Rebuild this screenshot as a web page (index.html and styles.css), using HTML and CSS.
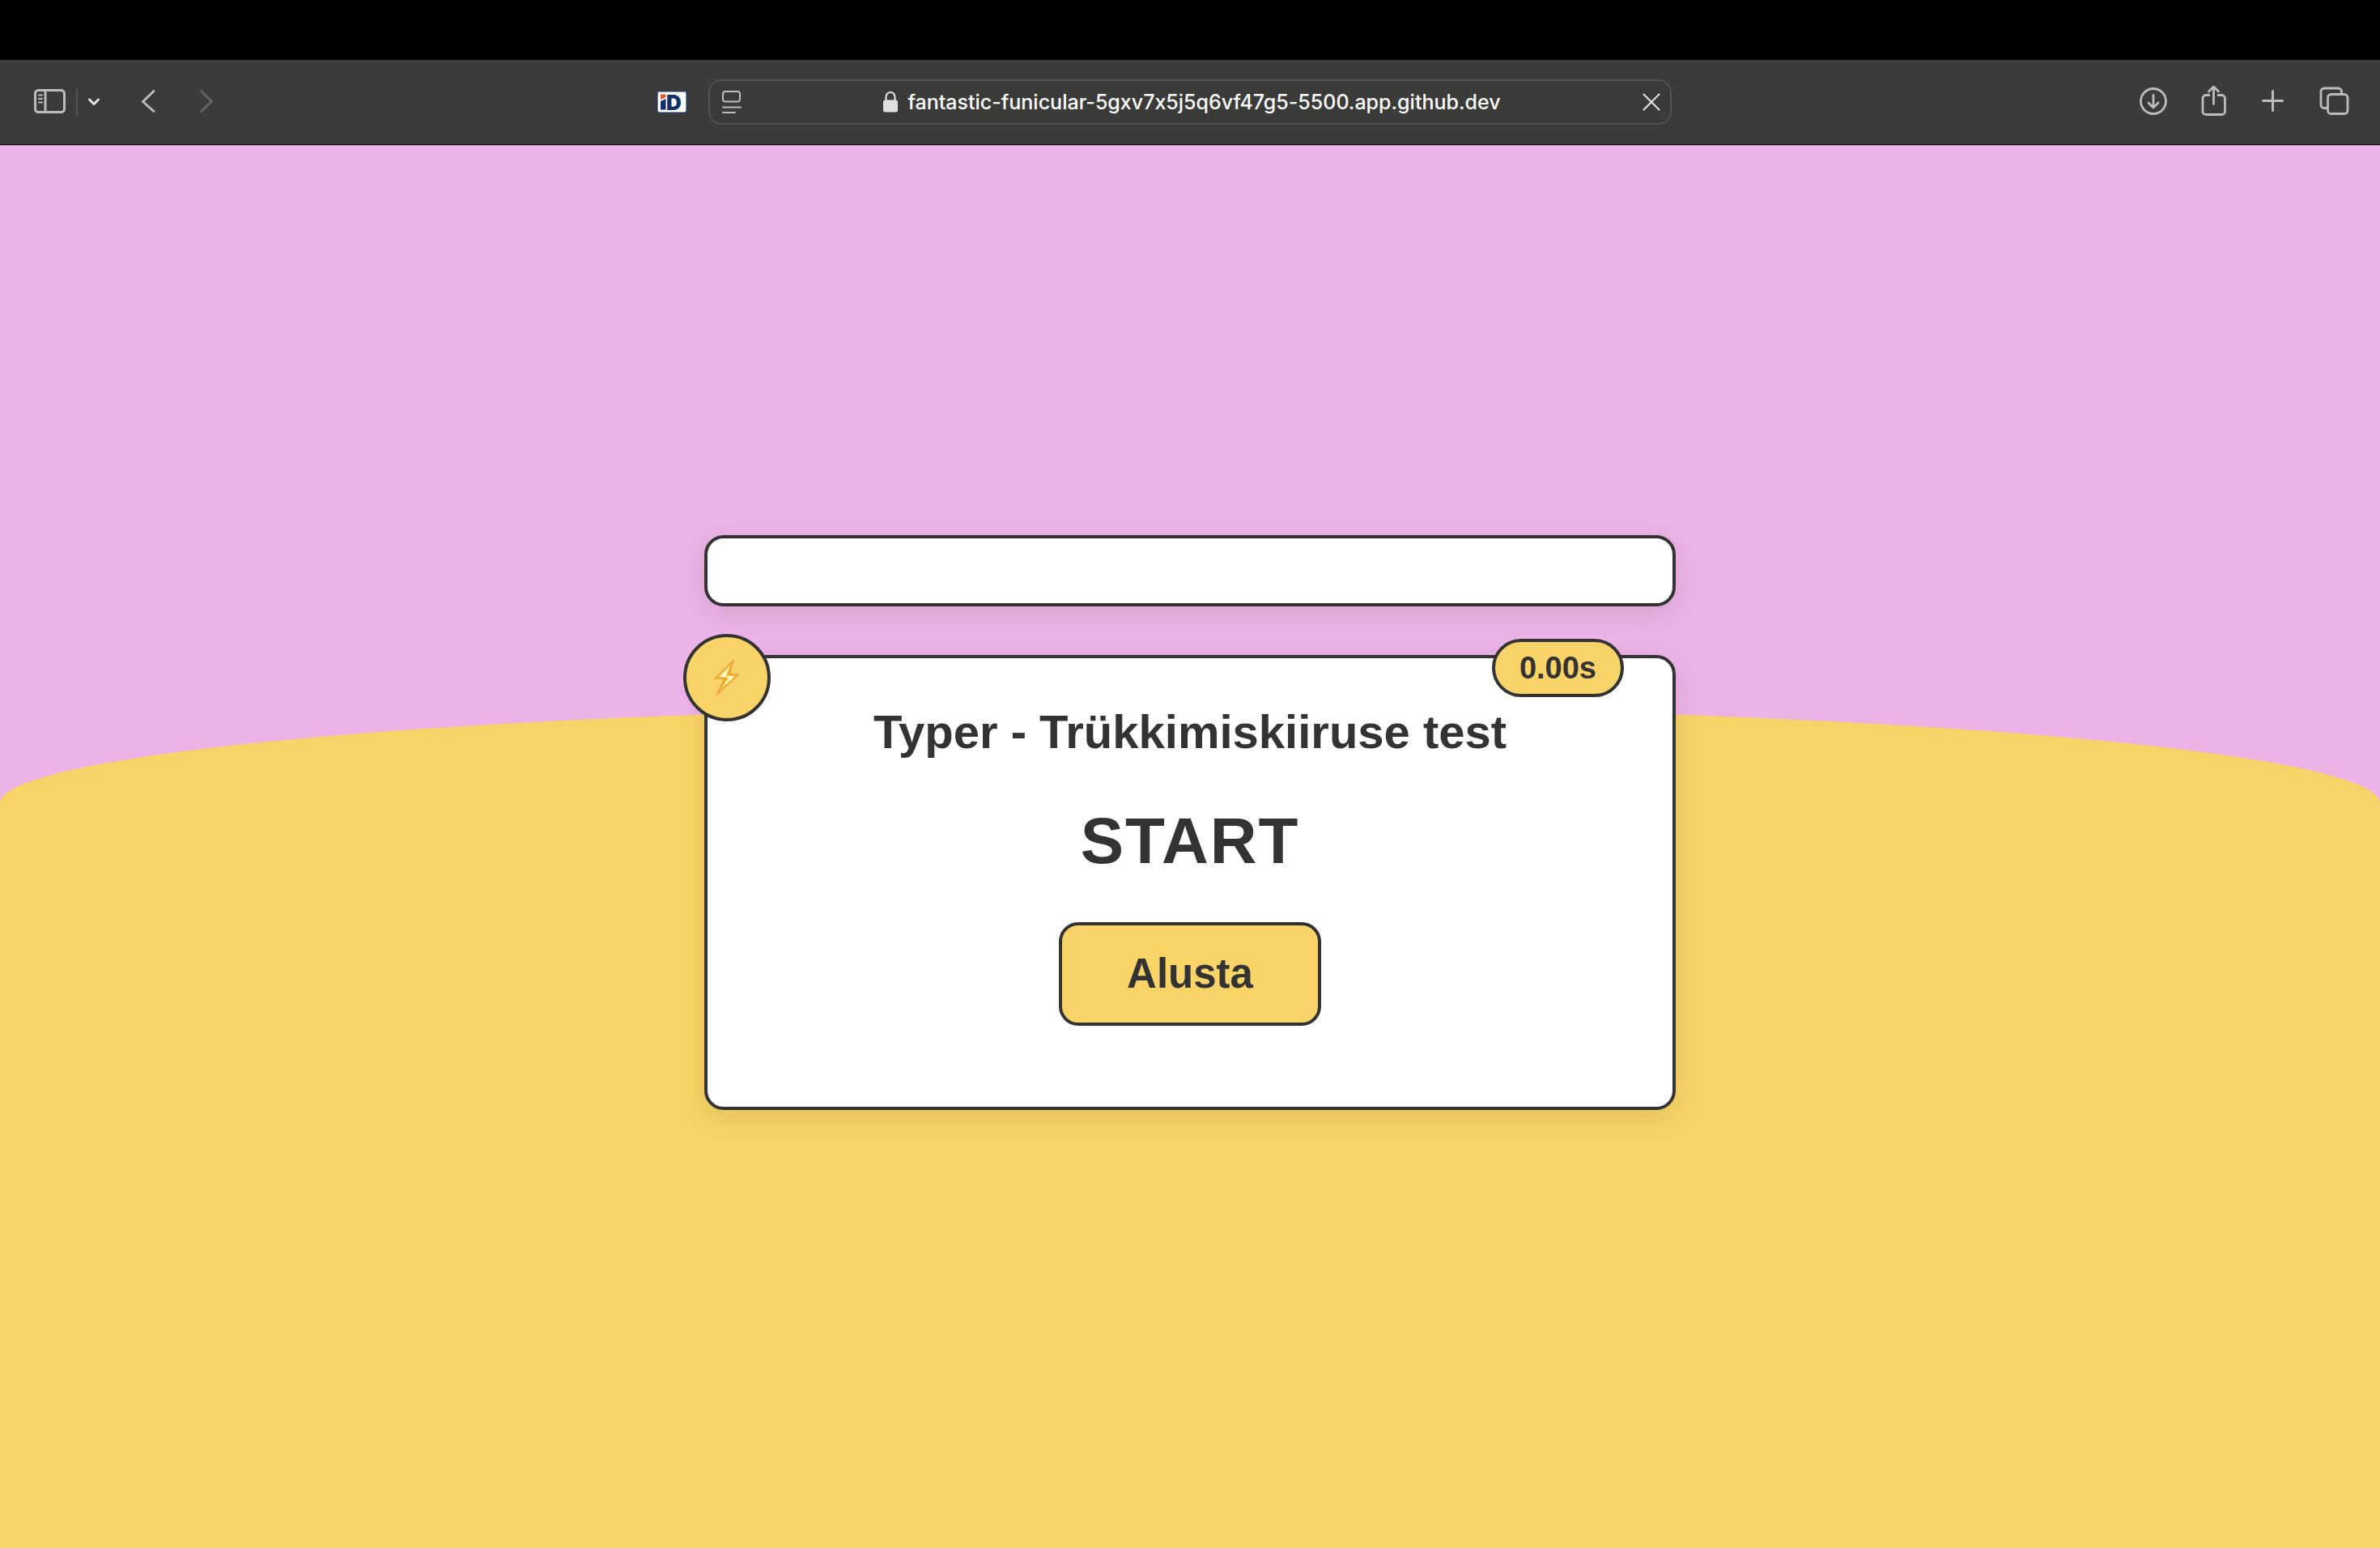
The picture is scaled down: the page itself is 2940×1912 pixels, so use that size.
FILE: index.html
```html
<!DOCTYPE html>
<html lang="et">
<head>
<meta charset="utf-8">
<meta name="viewport" content="width=device-width, initial-scale=1">
<title>Typer</title>
<link rel="stylesheet" href="styles.css">
</head>
<body>
<div class="menubar"></div>
<header class="toolbar">
  <div class="tools tools-left">
    <div class="sidebar-group">
      <button class="tool" type="button" aria-label="Sidebar">
        <svg width="40" height="40" viewBox="0 0 40 40" fill="none" stroke="currentColor" stroke-width="3" stroke-linecap="round"><rect x="1.5" y="5.5" width="36" height="27" rx="4"/><path d="M14 6v26"/><path stroke-width="2" d="M6 11.500h4M6 16h4M6 20.500h4"/></svg>
      </button>
      <span class="divider"></span>
      <button class="tool bright" type="button" aria-label="Tab groups">
        <svg width="16" height="40" viewBox="0 0 16 40" fill="none" stroke="currentColor" stroke-width="3" stroke-linecap="round" stroke-linejoin="round"><path d="M2.500 17l5.500 5.500L13.500 17"/></svg>
      </button>
    </div>
    <button class="tool" type="button" aria-label="Back">
      <svg width="22" height="40" viewBox="0 0 22 40" fill="none" stroke="currentColor" stroke-width="3" stroke-linecap="round" stroke-linejoin="round"><path d="M16 6.500L2.500 19.500 16 31.500"/></svg>
    </button>
    <button class="tool dim" type="button" aria-label="Forward">
      <svg width="22" height="40" viewBox="0 0 22 40" fill="none" stroke="currentColor" stroke-width="3" stroke-linecap="round" stroke-linejoin="round"><path d="M2.500 6.500L15.500 19.500 2.500 31.500"/></svg>
    </button>
    <button class="tool extension" type="button" aria-label="iD">
      <svg class="logo" width="38" height="28" viewBox="0 0 38 28"><rect x="1" y="1" width="36" height="26" rx="2" fill="#fff" stroke="#173a77" stroke-width="1.200"/><path d="M5 4.500h6.500V8L5 11z" fill="#e2582f"/><path d="M5 13l6.500-3v13.500H5z" fill="#12316b"/><text class="mark" x="12" y="23.500">D</text></svg>
    </button>
  </div>
  <div class="address">
    <button class="tool" type="button" aria-label="Page menu">
      <svg width="24" height="28" viewBox="0 0 24 28" fill="none" stroke="currentColor" stroke-width="2" stroke-linecap="round"><rect x="1" y="1" width="21" height="12.500" rx="3"/><path d="M1 20.500h22M1 27h15"/></svg>
    </button>
    <div class="location">
      <svg width="18" height="26" viewBox="0 0 18 26"><path d="M3.500 12V7a5.500 6 0 0 1 11 0v5" fill="none" stroke="#e0e0de" stroke-width="2.200"/><rect y="10.500" width="18" height="15" rx="2.500" fill="#e0e0de"/></svg>
      <input class="url" type="text" aria-label="Address" value="fantastic-funicular-5gxv7x5j5q6vf47g5-5500.app.github.dev">
    </div>
    <button class="tool bright" type="button" aria-label="Stop loading">
      <svg width="22" height="22" viewBox="0 0 22 22" fill="none" stroke="currentColor" stroke-width="2" stroke-linecap="round"><path d="M1.500 1.500l19 19M20.500 1.500l-19 19"/></svg>
    </button>
  </div>
  <div class="tools tools-right">
    <button class="tool" type="button" aria-label="Downloads">
      <svg width="40" height="40" viewBox="0 0 40 40" fill="none" stroke="currentColor" stroke-width="2.800" stroke-linecap="round" stroke-linejoin="round"><circle cx="18" cy="19" r="15.500"/><path d="M18 11.500v15M12 21l6 6 6-6"/></svg>
    </button>
    <button class="tool" type="button" aria-label="Share">
      <svg width="40" height="40" viewBox="0 0 40 40" fill="none" stroke="currentColor" stroke-width="2.800" stroke-linecap="round" stroke-linejoin="round"><path stroke-linecap="butt" d="M14 11.500H9a4 4 0 0 0-4 4V31.500a4 4 0 0 0 4 4h19.500a4 4 0 0 0 4-4V15.500a4 4 0 0 0-4-4H23"/><path d="M18.500 22.500V2M12.500 7l6-6 6 6"/></svg>
    </button>
    <button class="tool" type="button" aria-label="New tab">
      <svg width="40" height="40" viewBox="0 0 40 40" fill="none" stroke="currentColor" stroke-width="3" stroke-linecap="round"><path d="M5.500 18.500h24M17.500 6.500v24"/></svg>
    </button>
    <button class="tool" type="button" aria-label="Tab overview">
      <svg width="40" height="40" viewBox="0 0 40 40" fill="none" stroke="currentColor" stroke-width="2.800" stroke-linejoin="round"><path d="M11 27.500H7a4 4 0 0 1-4-4V7a4 4 0 0 1 4-4h17.500a4 4 0 0 1 4 4v3"/><rect x="11.500" y="10.500" width="24.500" height="24" rx="4"/></svg>
    </button>
  </div>
</header>
<main class="page">
  <div class="panel results" aria-live="polite"></div>
  <section class="panel game">
    <span class="badge" aria-hidden="true">
      <svg width="36" height="48" viewBox="0 0 36 48"><path d="M27.500 0L2 25.500 14 26 3.500 47.500 34 19.500 22 19z" fill="#f0a03a"/><path d="M24 6L6.500 23.500l12 .5L9 40.500 29.500 21.500 18 21z" fill="#fbd83f"/><path d="M22 10L9 23l12.500 .5L13 35.500 27 22.500 15.500 22z" fill="#fffbe0"/></svg>
    </span>
    <span class="timer">0.00s</span>
    <h1 class="title">Typer - Trükkimiskiiruse test</h1>
    <div class="word">START</div>
    <button class="start" type="button">Alusta</button>
  </section>
</main>
</body>
</html>
```
FILE: styles.css
```css
* {
  box-sizing: border-box;
}

body {
  margin: 0;
  min-height: 100vh;
  display: flex;
  flex-direction: column;
  font-family: Helvetica, "Liberation Sans", Arial, sans-serif;
  color: #333;
}

svg {
  display: block;
}

.menubar {
  height: 74px;
  background: #000;
}

.toolbar {
  display: grid;
  grid-template-columns: 1fr minmax(0, 1190px) 1fr;
  align-items: center;
  height: 105px;
  background: #3b3b39;
  border-bottom: 1px solid #000;
  color: #bcbcba;
}

.tools {
  display: flex;
  align-items: center;
}

.tools-left {
  gap: 50px;
  padding: 0 26px 0 42px;
}

.tools-right {
  justify-content: flex-end;
  gap: 34px;
  padding-right: 36px;
}

.sidebar-group {
  display: flex;
  align-items: center;
  gap: 12px;
}

.divider {
  width: 2px;
  height: 36px;
  background: #51514f;
}

.tool {
  padding: 0;
  border: 0;
  background: none;
  color: inherit;
}

.bright {
  color: #e4e4e2;
}

.dim {
  color: #636361;
}

.extension {
  margin-left: auto;
}

.logo {
  overflow: visible;
}

.mark {
  font: 900 26px Inter, sans-serif;
  fill: #12316b;
}

.address {
  display: flex;
  align-items: center;
  height: 56px;
  padding: 0 12px 0 15px;
  border: 2px solid #525250;
  border-radius: 16px;
}

.location {
  flex: 1;
  display: flex;
  align-items: center;
  justify-content: center;
  gap: 12px;
}

.url {
  field-sizing: content;
  padding: 0;
  border: 0;
  background: none;
  color: #fff;
  font: 500 25px/32px Inter, sans-serif;
  font-variant-ligatures: no-contextual;
}

.page {
  position: relative;
  z-index: 0;
  flex: 1;
  display: flex;
  flex-direction: column;
  align-items: center;
  justify-content: center;
  background: #ecb3e6;
  box-shadow: inset 0 1px #a58aa2;
}

.page::before {
  content: "";
  position: absolute;
  inset: 40% 0 0;
  z-index: -1;
  border-radius: 50% 50% 0 0 / 120px 120px 0 0;
  background: #f8d468;
}

.panel {
  width: 100%;
  max-width: 1200px;
  margin-bottom: 60px;
  border: 4px solid #333;
  border-radius: 24px;
  background: #fff;
  box-shadow: 0 8px 32px rgba(0, 0, 0, 0.1);
}

.results {
  padding: 40px;
}

.game {
  position: relative;
  display: flex;
  flex-direction: column;
  align-items: center;
  gap: 52px;
  padding: 56px 60px 100px;
}

.badge {
  position: absolute;
  top: -30px;
  left: -30px;
  display: grid;
  place-items: center;
  width: 108px;
  height: 108px;
  border: 4px solid #333;
  border-radius: 50%;
  background: #f8d468;
}

.timer {
  position: absolute;
  top: -24px;
  right: 60px;
  padding: 10px 30px;
  border: 4px solid #333;
  border-radius: 40px;
  background: #f8d468;
  font-size: 38px;
  font-weight: bold;
  line-height: 44px;
}

.title {
  margin: 0;
  font-size: 58px;
  line-height: 70px;
}

.word {
  font-size: 80px;
  font-weight: bold;
  line-height: 96px;
  letter-spacing: 2px;
}

.start {
  padding: 30px 80px;
  border: 4px solid #333;
  border-radius: 24px;
  background: #f8d468;
  color: inherit;
  font: bold 51px/60px Helvetica, "Liberation Sans", Arial, sans-serif;
}
```
